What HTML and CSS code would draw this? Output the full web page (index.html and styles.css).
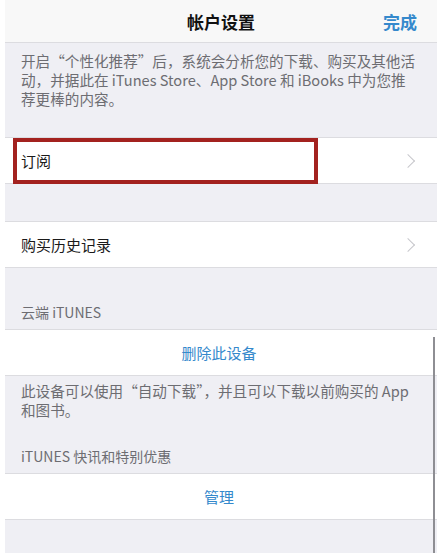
FILE: index.html
```html
<!DOCTYPE html>
<html lang="zh-CN">
<head>
  <meta charset="UTF-8" />
  <meta name="viewport" content="width=device-width, initial-scale=1.0" />
  <title>帐户设置</title>
  <link rel="stylesheet" href="styles.css">
</head>
<body>
  <div class="screen">
    <div class="navbar">
      <span class="nav-title">帐户设置</span>
      <span class="nav-done">完成</span>
    </div>

    <div class="note intro">开启“个性化推荐”后，系统会分析您的下载、购买及其他活动，并据此在 iTunes Store、App Store 和 iBooks 中为您推<br>荐更棒的内容。</div>

    <div class="row">
      <span class="row-label">订阅</span>
      <span class="chevron"></span>
      <div class="highlight"></div>
    </div>

    <div class="spacer"></div>

    <div class="row">
      <span class="row-label">购买历史记录</span>
      <span class="chevron"></span>
    </div>

    <div class="section-head head-cloud">云端 iTUNES</div>
    <div class="row row-action">删除此设备</div>
    <div class="note footer-note">此设备可以使用“自动下载”，并且可以下载以前购买的 App 和图书。</div>

    <div class="section-head head-news">iTUNES 快讯和特别优惠</div>
    <div class="row row-action">管理</div>

    <div class="scrollbar"></div>
  </div>
</body>
</html>
```

FILE: styles.css
```css
body {
  margin: 0;
  background: #ffffff;
  font-family: "Noto Sans CJK SC", "Noto Sans", sans-serif;
}
.screen {
  position: relative;
  margin: 0 3px 0 5px;
  height: 553px;
  background: #efeff4;
  overflow: hidden;
}
.navbar {
  height: 42px;
  background: #f8f8f8;
  border-bottom: 1px solid #dcdce0;
  display: flex;
  align-items: center;
  justify-content: center;
  position: relative;
}
.nav-title {
  font-size: 17px;
  font-weight: bold;
  color: #111;
}
.nav-done {
  position: absolute;
  right: 20px;
  top: 9px;
  font-size: 17px;
  font-weight: bold;
  color: #3589cc;
}
.note {
  font-size: 14.6px;
  line-height: 19px;
  color: #6d6d72;
  padding: 0 12px 0 16px;
}
.intro {
  height: 86px;
  padding-top: 8px;
}
.row {
  position: relative;
  height: 45px;
  background: #ffffff;
  border-top: 1px solid #dcdce0;
  display: flex;
  align-items: center;
  justify-content: space-between;
  padding: 0 20px 0 16px;
  font-size: 15px;
  color: #1a1a1a;
}
.chevron {
  width: 9px;
  height: 9px;
  border-right: 1.5px solid #c7c7cc;
  border-top: 1.5px solid #c7c7cc;
  transform: rotate(45deg);
  margin-right: 4px;
}
.highlight {
  position: absolute;
  left: 8px;
  top: 0;
  width: 297px;
  height: 38px;
  border: 4px solid #a3221f;
}
.spacer {
  height: 37px;
  border-top: 1px solid #dcdce0;
}
.section-head {
  font-size: 14px;
  color: #6d6d72;
  padding: 0 16px;
  border-top: 1px solid #dcdce0;
  display: flex;
  align-items: flex-end;
  padding-bottom: 7px;
}
.head-cloud {
  height: 54px;
}
.head-news {
  height: 38px;
  border-top: none;
}
.row-action {
  justify-content: center;
  color: #3589cc;
  font-size: 15px;
  border-bottom: 1px solid #dcdce0;
}
.footer-note {
  padding-top: 5px;
  height: 47px;
}
.scrollbar {
  position: absolute;
  right: 2px;
  top: 337px;
  bottom: 0;
  width: 2px;
  background: #8e8e93;
}
```
